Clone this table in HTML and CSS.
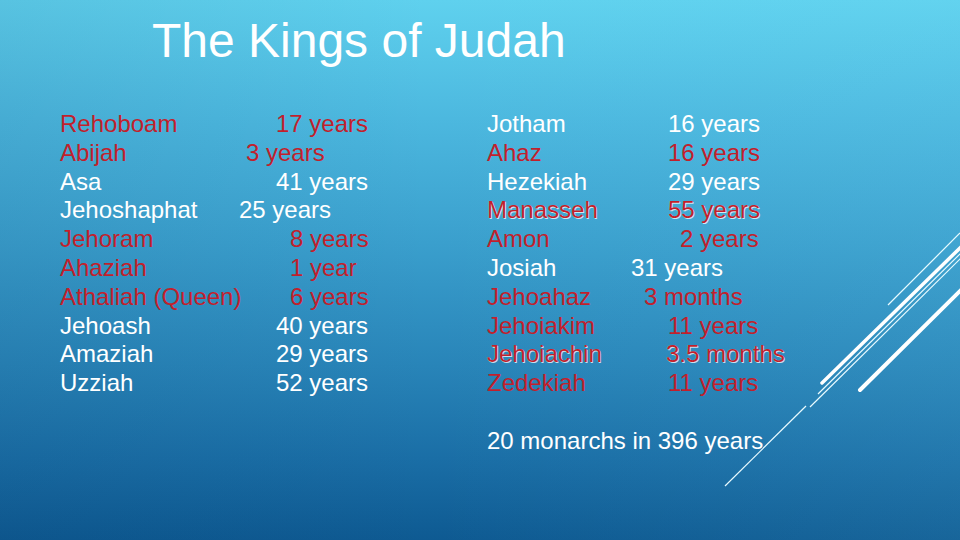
FILE: index.html
```html
<!DOCTYPE html>
<html lang="en">
<head>
<meta charset="utf-8">
<title>The Kings of Judah</title>
<link rel="stylesheet" href="styles.css">
</head>
<body>
<div class="slide">
  <h1 class="title">The Kings of Judah</h1>
  <div class="body">
    <div class="col col-left">
      <div class="row red"><span class="name">Rehoboam</span><span class="yrs t37">17 years</span></div>
      <div class="row red"><span class="name">Abijah</span><span class="yrs t7">3 years</span></div>
      <div class="row"><span class="name">Asa</span><span class="yrs t37">41 years</span></div>
      <div class="row"><span class="name">Jehoshaphat</span><span class="yrs t0">25 years</span></div>
      <div class="row red"><span class="name">Jehoram</span><span class="yrs t51">8 years</span></div>
      <div class="row red"><span class="name">Ahaziah</span><span class="yrs t51">1 year</span></div>
      <div class="row red"><span class="name">Athaliah (Queen)</span><span class="yrs t51">6 years</span></div>
      <div class="row"><span class="name">Jehoash</span><span class="yrs t37">40 years</span></div>
      <div class="row"><span class="name">Amaziah</span><span class="yrs t37">29 years</span></div>
      <div class="row"><span class="name">Uzziah</span><span class="yrs t37">52 years</span></div>
    </div>
    <div class="col col-right">
      <div class="row"><span class="name">Jotham</span><span class="yrs t37">16 years</span></div>
      <div class="row red"><span class="name">Ahaz</span><span class="yrs t37">16 years</span></div>
      <div class="row"><span class="name">Hezekiah</span><span class="yrs t37">29 years</span></div>
      <div class="row red glow"><span class="name">Manasseh</span><span class="yrs t37">55 years</span></div>
      <div class="row red"><span class="name">Amon</span><span class="yrs t49">2 years</span></div>
      <div class="row"><span class="name">Josiah</span><span class="yrs t0">31 years</span></div>
      <div class="row red"><span class="name">Jehoahaz</span><span class="yrs t13">3 months</span></div>
      <div class="row red"><span class="name">Jehoiakim</span><span class="yrs t37">11 years</span></div>
      <div class="row red glow"><span class="name">Jehoiachin</span><span class="yrs t35">3.5 months</span></div>
      <div class="row red"><span class="name">Zedekiah</span><span class="yrs t37">11 years</span></div>
      <div class="row blank"></div>
      <div class="row summary">20 monarchs in 396 years</div>
    </div>
  </div>
  <svg class="deco" width="960" height="540" viewBox="0 0 960 540" aria-hidden="true">
    <line x1="888" y1="305" x2="960" y2="233" stroke="#e9fbff" stroke-width="1.2"/>
    <line x1="822" y1="383" x2="962" y2="246" stroke="#ffffff" stroke-width="3.5" stroke-linecap="round"/>
    <line x1="818" y1="394" x2="962" y2="252" stroke="#e9fbff" stroke-width="1.2"/>
    <line x1="725" y1="486" x2="806" y2="406" stroke="#e9fbff" stroke-width="1.2"/>
    <line x1="810" y1="407" x2="962" y2="257" stroke="#e9fbff" stroke-width="1.2"/>
    <line x1="860" y1="390" x2="962" y2="289" stroke="#ffffff" stroke-width="4" stroke-linecap="round"/>
  </svg>
</div>
</body>
</html>
```
FILE: styles.css
```css
html, body {
  margin: 0;
  padding: 0;
}

body {
  width: 960px;
  height: 540px;
  overflow: hidden;
  font-family: "Liberation Sans", Arial, sans-serif;
}

.slide {
  position: relative;
  width: 960px;
  height: 540px;
  overflow: hidden;
  background:
    linear-gradient(to right, rgba(0, 30, 70, 0.08) 0%, rgba(0, 0, 0, 0) 45%, rgba(140, 235, 255, 0.08) 100%),
    linear-gradient(to bottom, #5fd1ee 0%, #4cb8df 22%, #3a9fcd 45%, #2884b8 68%, #1a6ea6 85%, #0e5a92 100%);
}

.title {
  margin: 0;
  padding: 17px 0 0 152px;
  font-weight: normal;
  font-size: 48px;
  line-height: 48px;
  color: #ffffff;
}

.body {
  display: flex;
  padding-top: 45px;
}

.col {
  display: flex;
  flex-direction: column;
}

.col-left {
  padding-left: 60px;
  width: 367px;
}

.col-right {
  padding-left: 60px;
}

.row {
  display: flex;
  font-size: 24px;
  line-height: 28.8px;
  height: 28.8px;
  color: #ffffff;
  white-space: nowrap;
}

.col-left .name {
  width: 179px;
}

.col-right .name {
  width: 144px;
}

.red {
  color: #c21f2c;
}

.glow {
  text-shadow: 0.7px 0.7px 0 rgba(255, 255, 255, 0.75), -0.4px -0.4px 0 rgba(255, 255, 255, 0.5);
}

.t0 { margin-left: 0; }
.t7 { margin-left: 7px; }
.t13 { margin-left: 13px; }
.t35 { margin-left: 35px; }
.t37 { margin-left: 37px; }
.t49 { margin-left: 49px; }
.t51 { margin-left: 51px; }

.summary {
  color: #ffffff;
}

.deco {
  position: absolute;
  left: 0;
  top: 0;
  pointer-events: none;
}
```
